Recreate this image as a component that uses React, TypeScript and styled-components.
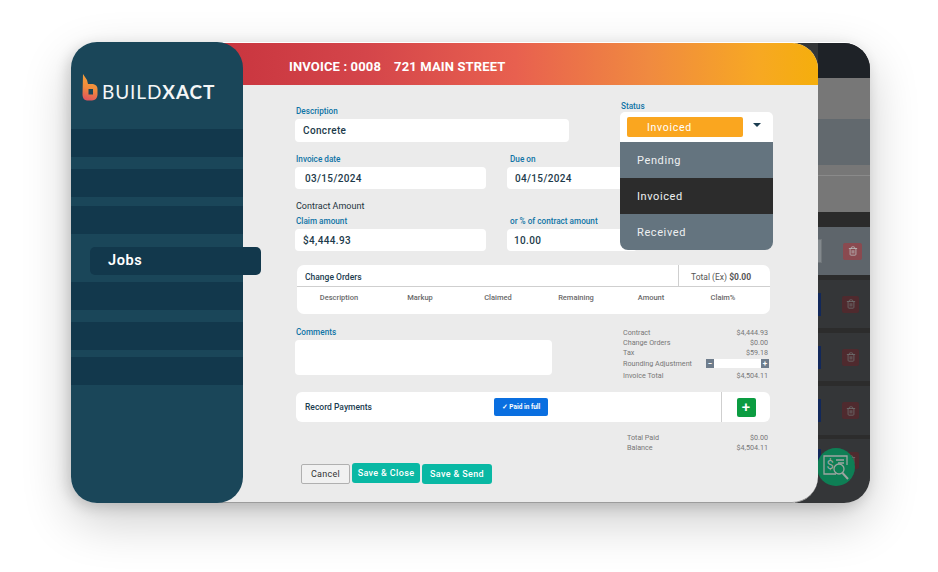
import React from "react";
import styled, { createGlobalStyle } from "styled-components";
import { Trash2 } from "lucide-react";

const Global = createGlobalStyle`
  html { overflow: hidden; background: #fff; }
  body { margin: 0; padding: 0; min-height: 100vh; background: #fff; font-family: Roboto, "Liberation Sans", sans-serif; }
  * { box-sizing: border-box; }
  #root { padding-top: 42px; }
`;

const Frame = styled.div`
  display: flex;
  width: 799px;
  height: 461px;
  margin: 0 0 0 71px;
  border-radius: 26px;
  box-shadow: 0 18px 50px rgba(0, 0, 0, 0.2), -3px 4px 14px rgba(0, 0, 0, 0.16);
`;

const Sidebar = styled.aside`
  position: relative;
  z-index: 2;
  flex: 0 0 172px;
  min-width: 0;
  border-radius: 26px;
  background: #1a4659;
  display: flex;
  flex-direction: column;
`;

const LogoRow = styled.div`
  height: 87px;
  padding: 32px 0 0 11px;
  display: flex;
  align-items: flex-start;
  gap: 4px;
`;

const LogoText = styled.div`
  font-family: Lato, sans-serif;
  font-size: 19px;
  line-height: 26px;
  margin-top: 5px;
  letter-spacing: 0.9px;
  color: #f4f6f7;
  font-weight: 400;
  white-space: nowrap;
  b { font-weight: 700; }
`;

const NavBar = styled.div<{ $gap: number }>`
  height: 28px;
  margin-top: ${(p) => p.$gap}px;
  background: #12384c;
`;

const JobsPill = styled.div<{ $gap: number }>`
  flex: none;
  width: 171px;
  height: 28px;
  margin: ${(p) => p.$gap}px 0 0 19px;
  padding-left: 18px;
  border-radius: 5px;
  background: #12384c;
  color: #fff;
  font-size: 14.5px;
  font-weight: 600;
  letter-spacing: 0.6px;
  line-height: 27px;
`;

const Modal = styled.main`
  position: relative;
  z-index: 1;
  flex: 0 0 605px;
  height: 460px;
  margin: 1px 0 0 -30px;
  border-radius: 0 26px 26px 0;
  border-bottom: 1px solid #9c9c9c;
  background: #ebebeb;
  overflow: hidden;
`;

const Header = styled.header`
  height: 42px;
  padding: 4px 0 0 76px;
  display: flex;
  align-items: center;
  gap: 13px;
  background: linear-gradient(90deg, #c8343e 0%, #d4454a 25%, #e8604f 50%, #f08a40 72%, #f7a823 90%, #f5ae0c 100%);
  color: #fff;
  font-size: 13px;
  font-weight: 700;
  letter-spacing: 0.15px;
`;

const Body = styled.div`
  position: relative;
  padding: 21px 0 0 82px;
`;

const Label = styled.div<{ $inset?: number }>`
  height: 10px;
  padding-left: ${(p) => p.$inset ?? 1}px;
  color: #0f74a6;
  font-size: 8.2px;
  font-weight: 500;
  line-height: 10px;
  white-space: nowrap;
`;

const Input = styled.div<{ $w?: number; $h?: number; $pad?: number }>`
  width: ${(p) => (p.$w ? `${p.$w}px` : "100%")};
  height: ${(p) => p.$h ?? 22}px;
  margin-top: 3px;
  padding-left: ${(p) => p.$pad ?? 8}px;
  border-radius: 4px;
  background: #fff;
  color: #1c3a4a;
  font-size: 10px;
  font-weight: 500;
  letter-spacing: 0.35px;
  line-height: ${(p) => (p.$h ?? 22) + 1}px;
`;

const FieldRow = styled.div<{ $top: number }>`
  display: grid;
  grid-template-columns: 191px 130px;
  column-gap: 21px;
  margin-top: ${(p) => p.$top}px;
`;

const SectionTitle = styled.div`
  margin: 11px 0 0 1px;
  height: 12px;
  color: #23333d;
  font-size: 9px;
  line-height: 12px;
  font-weight: 400;
`;

const StatusMenu = styled.div`
  position: absolute;
  left: 407px;
  top: 16px;
  width: 153px;
`;

const StatusLabel = styled(Label)`
  margin-bottom: 1px;
`;

const SelectBox = styled.div`
  height: 30px;
  padding: 5px 7px;
  display: flex;
  align-items: flex-start;
  background: #fff;
  border-radius: 5px 5px 0 0;
`;

const StatusPill = styled.div`
  width: 116px;
  height: 20px;
  padding-left: 20px;
  border-radius: 2px;
  background: #faa61f;
  color: #fff;
  font-size: 10.5px;
  letter-spacing: 0.7px;
  line-height: 21px;
`;

const Caret = styled.span`
  width: 0;
  height: 0;
  margin: 6px 0 0 10px;
  border-left: 4px solid transparent;
  border-right: 4px solid transparent;
  border-top: 4px solid #1b3d50;
`;

const MenuItem = styled.div<{ $active?: boolean }>`
  height: 36px;
  padding-left: 17px;
  background: ${(p) => (p.$active ? "#2c2c2c" : "#64747f")};
  color: #eef0f1;
  font-size: 11px;
  letter-spacing: 0.6px;
  line-height: 37px;
  &:last-child { border-radius: 0 0 8px 8px; }
`;

const Card = styled.section`
  margin: 14px 0 0 2px;
  width: 473px;
  height: 49px;
  background: #fff;
  border-radius: 7px;
`;

const CardHeader = styled.div`
  height: 22px;
  display: flex;
  border-bottom: 1px solid #cfcfcf;
`;

const CardTitle = styled.div`
  flex: 1;
  padding: 0 0 0 8px;
  color: #1b3d50;
  font-size: 8.5px;
  font-weight: 500;
  line-height: 24px;
`;

const TotalEx = styled.div`
  width: 92px;
  padding-left: 12px;
  border-left: 1px solid #cfcfcf;
  color: #555;
  font-size: 8.5px;
  line-height: 24px;
  b { font-weight: 700; }
`;

const Columns = styled.div`
  display: grid;
  grid-template-columns: 84px 78px 78px 78px 72px 72px;
  padding-top: 6px;
`;

const ColumnHead = styled.div`
  text-align: center;
  color: #6a6a6a;
  font-size: 7.5px;
  font-weight: 500;
  line-height: 10px;
`;

const MiddleRow = styled.div`
  display: flex;
  justify-content: space-between;
  width: 475px;
  margin-top: 13px;
`;

const Totals = styled.div`
  width: 145px;
  margin-right: 2px;
`;

const TotalRow = styled.div<{ $h?: number }>`
  display: flex;
  justify-content: space-between;
  align-items: center;
  height: ${(p) => p.$h ?? 10}px;
  color: #777;
  font-size: 7.2px;
`;

const Stepper = styled.div`
  display: flex;
  width: 63px;
  height: 9px;
  margin-right: -1px;
  background: #fff;
  justify-content: space-between;
`;

const StepButton = styled.span`
  width: 8px;
  height: 9px;
  background: #6f7d8c;
  color: #fff;
  font-size: 8px;
  font-weight: 700;
  line-height: 9px;
  text-align: center;
`;

const PaymentCard = styled.section`
  display: flex;
  align-items: center;
  width: 474px;
  height: 30px;
  margin: 11px 0 0 1px;
  background: #fff;
  border-radius: 6px;
`;

const PaymentTitle = styled.div`
  width: 198px;
  padding-left: 9px;
  color: #1b3d50;
  font-size: 8.5px;
  font-weight: 500;
`;

const PaidButton = styled.div`
  width: 54px;
  height: 18px;
  border-radius: 2px;
  background: #0a6fe0;
  color: #fff;
  font-size: 6.5px;
  font-weight: 700;
  line-height: 18px;
  text-align: center;
`;

const AddCell = styled.div`
  margin-left: auto;
  width: 49px;
  height: 100%;
  border-left: 1px solid #cfcfcf;
  display: flex;
  align-items: center;
  justify-content: center;
`;

const AddButton = styled.div`
  width: 19px;
  height: 19px;
  border-radius: 2px;
  background: #0b9c41;
  color: #fff;
  font-size: 15px;
  font-weight: 500;
  line-height: 18px;
  text-align: center;
`;

const PaidTotals = styled.div`
  width: 141px;
  margin: 10px 0 0 332px;
`;

const Actions = styled.div`
  display: flex;
  align-items: flex-start;
  gap: 2px;
  margin: 11px 0 0 6px;
`;

const CancelButton = styled.div`
  width: 49px;
  height: 20px;
  margin-top: 1px;
  border: 1px solid #b0b0b0;
  border-radius: 2px;
  background: #f1f1f1;
  color: #333;
  font-size: 9px;
  letter-spacing: 0.3px;
  line-height: 19px;
  text-align: center;
`;

const SaveButton = styled.div<{ $w: number; $raised?: boolean }>`
  width: ${(p) => p.$w}px;
  height: 20px;
  margin-top: ${(p) => (p.$raised ? 0 : 1)}px;
  border-radius: 3px;
  background: #09b8a4;
  color: #fff;
  font-size: 9px;
  font-weight: 500;
  letter-spacing: 0.35px;
  line-height: 20px;
  text-align: center;
`;

const BackPanel = styled.div`
  position: relative;
  flex: 0 0 75px;
  height: 460px;
  margin: 1px 0 0 -23px;
  padding-left: 23px;
  display: flex;
  flex-direction: column;
  border-radius: 0 26px 26px 0;
  background: #343638;
  overflow: hidden;
`;

const Band = styled.div<{ $h: number; $tone: string; $right?: number }>`
  flex: 0 0 ${(p) => p.$h}px;
  display: flex;
  align-items: center;
  justify-content: space-between;
  padding-right: ${(p) => p.$right ?? 11}px;
  background: ${(p) => p.$tone};
`;

const GrayRule = styled.div`
  height: 1px;
  margin: -37px 0 36px;
  background: #8a8a8a;
`;

const StubBlue = styled.span`
  width: 3px;
  height: 23px;
  background: #12285a;
`;

const StubBox = styled.span`
  width: 4px;
  height: 24px;
  background: #83898d;
  border: 1px solid #70767a;
  border-left: 0;
`;

const TrashBox = styled.span<{ $bright?: boolean }>`
  display: flex;
  align-items: center;
  justify-content: center;
  width: ${(p) => (p.$bright ? 19 : 17)}px;
  height: 17px;
  border-radius: 2px;
  background: ${(p) => (p.$bright ? "#8a4a50" : "#4f2a2e")};
  color: ${(p) => (p.$bright ? "#b9b9b9" : "#6d6d6d")};
`;

const Fab = styled.div`
  position: absolute;
  left: 22px;
  top: 405px;
  width: 38px;
  height: 38px;
  border-radius: 50%;
  background: #0e7f55;
  display: flex;
  align-items: center;
  justify-content: center;
`;

const FabText = styled.text`
  font-family: Roboto, sans-serif;
  font-size: 13px;
  fill: #9da5a1;
`;

const Logo = () => (
  <svg width="16" height="27" viewBox="0 0 16 27" aria-hidden="true">
    <defs>
      <linearGradient id="lg" x1="0.6" y1="0" x2="0.4" y2="1">
        <stop offset="0" stopColor="#f6a33a" />
        <stop offset="0.55" stopColor="#f08a3c" />
        <stop offset="1" stopColor="#e2545c" />
      </linearGradient>
    </defs>
    <path
      fillRule="evenodd"
      fill="url(#lg)"
      d="M1 0 L5 6 L6 10 H11 Q15.5 11 15.5 15 V21 Q15 26 10 26.5 H5 Q0.8 26 0.5 21 Z M6.5 15 V20.5 H11 V15 Z"
    />
  </svg>
);

const FabIcon = () => (
  <svg width="27" height="25" viewBox="0 0 27 25" fill="none" stroke="#9da5a1" strokeWidth="1.3" aria-hidden="true">
    <path d="M13 19 H1 V1 H24 V10" />
    <path d="M13 5 H21 M15 8 H21" />
    <circle cx="16" cy="14" r="5" />
    <path d="M19.5 18 L25 24" strokeWidth="2" />
    <FabText x="3.5" y="14" stroke="none">$</FabText>
  </svg>
);

export default function App() {
  return (
    <>
      <Global />
      <Frame>
        <Sidebar>
          <LogoRow>
            <Logo />
            <LogoText>
              BUILD<b>XACT</b>
            </LogoText>
          </LogoRow>
          <NavBar $gap={0} />
          <NavBar $gap={12} />
          <NavBar $gap={9} />
          <JobsPill $gap={13}>Jobs</JobsPill>
          <NavBar $gap={7} />
          <NavBar $gap={12} />
          <NavBar $gap={7} />
        </Sidebar>

        <Modal>
          <Header>
            <span>INVOICE : 0008</span>
            <span>721 MAIN STREET</span>
          </Header>
          <Body>
            <Label>Description</Label>
            <Input $w={274} $h={23}>Concrete</Input>

            <FieldRow $top={12}>
              <div>
                <Label>Invoice date</Label>
                <Input $pad={10}>03/15/2024</Input>
              </div>
              <div>
                <Label $inset={3}>Due on</Label>
                <Input>04/15/2024</Input>
              </div>
            </FieldRow>

            <SectionTitle>Contract Amount</SectionTitle>
            <FieldRow $top={4}>
              <div>
                <Label>Claim amount</Label>
                <Input>$4,444.93</Input>
              </div>
              <div>
                <Label $inset={3}>or % of contract amount</Label>
                <Input $pad={7}>10.00</Input>
              </div>
            </FieldRow>

            <Card>
              <CardHeader>
                <CardTitle>Change Orders</CardTitle>
                <TotalEx>
                  Total (Ex) <b>$0.00</b>
                </TotalEx>
              </CardHeader>
              <Columns>
                <ColumnHead>Description</ColumnHead>
                <ColumnHead>Markup</ColumnHead>
                <ColumnHead>Claimed</ColumnHead>
                <ColumnHead>Remaining</ColumnHead>
                <ColumnHead>Amount</ColumnHead>
                <ColumnHead>Claim%</ColumnHead>
              </Columns>
            </Card>

            <MiddleRow>
              <div>
                <Label>Comments</Label>
                <Input $w={257} $h={35} />
              </div>
              <Totals>
                <TotalRow><span>Contract</span><span>$4,444.93</span></TotalRow>
                <TotalRow><span>Change Orders</span><span>$0.00</span></TotalRow>
                <TotalRow><span>Tax</span><span>$59.18</span></TotalRow>
                <TotalRow $h={12}>
                  <span>Rounding Adjustment</span>
                  <Stepper>
                    <StepButton>−</StepButton>
                    <StepButton>+</StepButton>
                  </Stepper>
                </TotalRow>
                <TotalRow $h={12}><span>Invoice Total</span><span>$4,504.11</span></TotalRow>
              </Totals>
            </MiddleRow>

            <PaymentCard>
              <PaymentTitle>Record Payments</PaymentTitle>
              <PaidButton>✓ Paid in full</PaidButton>
              <AddCell>
                <AddButton>+</AddButton>
              </AddCell>
            </PaymentCard>

            <PaidTotals>
              <TotalRow><span>Total Paid</span><span>$0.00</span></TotalRow>
              <TotalRow><span>Balance</span><span>$4,504.11</span></TotalRow>
            </PaidTotals>

            <Actions>
              <CancelButton>Cancel</CancelButton>
              <SaveButton $w={68} $raised>Save &amp; Close</SaveButton>
              <SaveButton $w={70}>Save &amp; Send</SaveButton>
            </Actions>

            <StatusMenu>
              <StatusLabel>Status</StatusLabel>
              <SelectBox>
                <StatusPill>Invoiced</StatusPill>
                <Caret />
              </SelectBox>
              <MenuItem>Pending</MenuItem>
              <MenuItem $active>Invoiced</MenuItem>
              <MenuItem>Received</MenuItem>
            </StatusMenu>
          </Body>
        </Modal>

        <BackPanel>
          <Band $h={35} $tone="#1e2227" />
          <Band $h={41} $tone="#777777" />
          <Band $h={46} $tone="#62696e" />
          <Band $h={47} $tone="#777777" />
          <GrayRule />
          <Band $h={15} $tone="#2b2b2b" />
          <Band $h={48} $tone="#5e656b" $right={8}>
            <StubBox />
            <TrashBox $bright><Trash2 size={10} /></TrashBox>
          </Band>
          <Band $h={5} $tone="#2c2c2c" />
          <Band $h={48} $tone="#343638">
            <StubBlue />
            <TrashBox><Trash2 size={10} /></TrashBox>
          </Band>
          <Band $h={5} $tone="#2c2c2c" />
          <Band $h={48} $tone="#343638">
            <StubBlue />
            <TrashBox><Trash2 size={10} /></TrashBox>
          </Band>
          <Band $h={5} $tone="#2c2c2c" />
          <Band $h={49} $tone="#343638">
            <StubBlue />
            <TrashBox><Trash2 size={10} /></TrashBox>
          </Band>
          <Band $h={4} $tone="#2c2c2c" />
          <Band $h={42} $tone="#343638">
            <StubBlue />
            <TrashBox><Trash2 size={10} /></TrashBox>
          </Band>
          <Fab><FabIcon /></Fab>
        </BackPanel>
      </Frame>
    </>
  );
}
